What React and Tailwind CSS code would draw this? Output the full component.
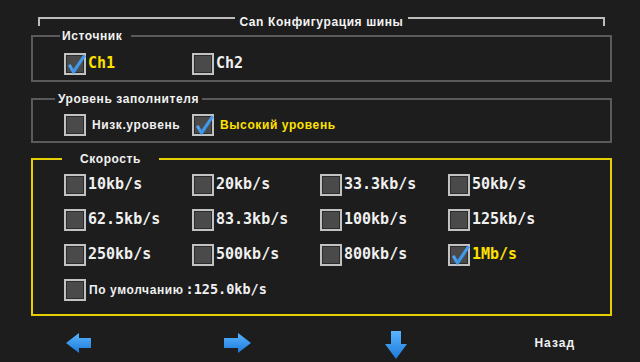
import React from "react";

const sans = "font-['Liberation_Sans',Arial,sans-serif]";
const mono = "font-['DejaVu_Sans_Mono','Liberation_Mono',monospace]";

function Box({ checked }) {
  return (
    <span className="relative block w-[22px] h-[22px] shrink-0 border-2 border-[#c2c2c2] bg-[#4a4a4a] shadow-[inset_0_0_0_1px_#2c2c2c]">
      {checked && (
        <svg className="absolute -left-[2px] -top-[3px]" width="24" height="25" viewBox="0 0 24 25">
          <defs>
            <linearGradient id="chk" x1="0" y1="0" x2="1" y2="1">
              <stop offset="0" stopColor="#6cc0ff" />
              <stop offset="1" stopColor="#1a78dc" />
            </linearGradient>
          </defs>
          <path d="M4 13.5 L6.5 12 L9.5 17 L19.5 2.5 L22 4 L10.5 21.5 L8.5 21.5 Z" fill="url(#chk)" />
        </svg>
      )}
    </span>
  );
}

function Option({ label, checked, kind = "mono" }) {
  return (
    <div className="flex items-center h-[23px]">
      <Box checked={checked} />
      <span
        className={
          kind === "mono"
            ? `${mono} ml-[2px] text-[15px] font-bold leading-none ${checked ? "text-[#ffe100]" : "text-[#f0f0f0]"}`
            : `${sans} ml-[6px] text-[12px] font-bold tracking-[0.6px] leading-none ${checked ? "text-[#ffe100]" : "text-[#f0f0f0]"}`
        }
      >
        {label}
      </span>
    </div>
  );
}

function Group({ title, left, pad, className, children }) {
  return (
    <div className={`relative ml-[31px] w-[581px] border-2 ${className}`}>
      <span
        className={`${sans} absolute -top-[8px] bg-[#1d1d1d] text-[12px] font-bold tracking-[0.6px] leading-[14px] text-[#f2f2f2] ${left} ${pad}`}
      >
        {title}
      </span>
      {children}
    </div>
  );
}

const speeds = [
  ["10kb/s", false], ["20kb/s", false], ["33.3kb/s", false], ["50kb/s", false],
  ["62.5kb/s", false], ["83.3kb/s", false], ["100kb/s", false], ["125kb/s", false],
  ["250kb/s", false], ["500kb/s", false], ["800kb/s", false], ["1Mb/s", true],
];

function Arrow({ dir }) {
  const grad = (
    <defs>
      <linearGradient id={`ag-${dir}`} x1="0" y1="0" x2="0" y2="1">
        <stop offset="0" stopColor="#5ab4ff" />
        <stop offset="1" stopColor="#1b7ad8" />
      </linearGradient>
    </defs>
  );
  if (dir === "down") {
    return (
      <svg width="22" height="28" viewBox="0 0 22 28" className="mt-[4px]">
        {grad}
        <path d="M6 0 H16 V13 H22 L11 28 L0 13 H6 Z" fill={`url(#ag-${dir})`} />
      </svg>
    );
  }
  const d = dir === "left"
    ? "M0 10 L13 0 V5 H25 V15 H13 V20 Z"
    : "M27 10 L14 0 V5 H0 V15 H14 V20 Z";
  return (
    <svg width="27" height="20" viewBox="0 0 27 20">
      {grad}
      <path d={d} fill={`url(#ag-${dir})`} />
    </svg>
  );
}

export default function App() {
  return (
    <div className="w-[640px] h-[362px] bg-[#1d1d1d] overflow-hidden flex flex-col">
      {/* title bracket */}
      <div className="mt-[17px] ml-[38px] w-[567px] h-[9px] flex items-start">
        <div className="flex-1 h-[9px] border-t-2 border-l-2 border-[#bcbcbc]" />
        <span className={`${sans} px-[5px] -mt-[2px] text-[12px] font-bold tracking-[0.6px] leading-[14px] text-[#f4f4f4] whitespace-nowrap`}>
          Can Конфигурация шины
        </span>
        <div className="flex-1 h-[9px] border-t-2 border-r-2 border-[#bcbcbc]" />
      </div>

      {/* source */}
      <Group title="Источник" left="left-[27px]" pad="pl-[2px] pr-[9px]" className="mt-[9px] h-[47px] border-[#5a5a5a]">
        <div className="grid grid-cols-[128px_128px] pl-[31px] pt-[15px]">
          <Option label="Ch1" checked />
          <Option label="Ch2" />
        </div>
      </Group>

      {/* level */}
      <Group title="Уровень заполнителя" left="left-[22px]" pad="px-[3px]" className="mt-[16px] h-[45px] border-[#5a5a5a]">
        <div className="grid grid-cols-[128px_200px] pl-[31px] pt-[13px]">
          <Option label="Низк.уровень" kind="sans" />
          <Option label="Высокий уровень" kind="sans" checked />
        </div>
      </Group>

      {/* speed */}
      <Group title="Скорость" left="left-[29px]" pad="px-[18px]" className="mt-[15px] h-[158px] border-[#e6cf00]">
        <div className="grid grid-cols-[128px_128px_128px_128px] gap-y-[12px] pl-[31px] pt-[13px]">
          {speeds.map(([s, c]) => (
            <Option key={s} label={s} checked={c} />
          ))}
          <div className="col-span-4 flex items-center h-[23px]">
            <Box />
            <span className={`${sans} ml-[3px] text-[12px] font-bold tracking-[0.6px] text-[#f0f0f0]`}>
              По умолчанию
            </span>
            <span className={`${mono} ml-[2px] text-[13.5px] font-bold text-[#f0f0f0]`}>:125.0kb/s</span>
          </div>
        </div>
      </Group>

      {/* bottom nav */}
      <div className="mt-[11px] pr-[6px] h-[20px] grid grid-cols-4 items-center justify-items-center">
        <Arrow dir="left" />
        <Arrow dir="right" />
        <Arrow dir="down" />
        <span className={`${sans} text-[12px] font-bold tracking-[1px] text-[#f2f2f2]`}>Назад</span>
      </div>
    </div>
  );
}
